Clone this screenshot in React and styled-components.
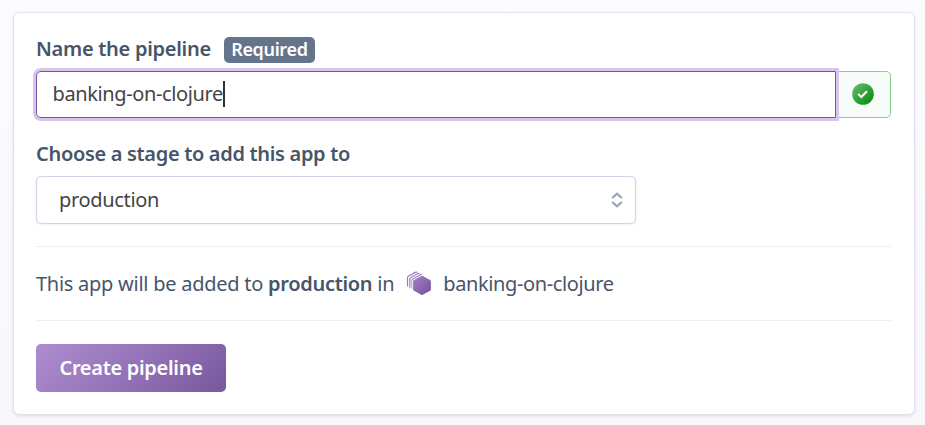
import React from "react";
import styled, { createGlobalStyle } from "styled-components";

const GlobalStyle = createGlobalStyle`
  *, *::before, *::after { box-sizing: border-box; }
  body {
    margin: 0;
    background: linear-gradient(#fcfcff, #f8f7fc);
    font-family: "Noto Sans", "Open Sans", sans-serif;
    font-size: 20px;
    color: #475569;
  }
`;

const Page = styled.main`
  height: 425px;
  padding: 13px 11px 11px 14px;
  overflow: hidden;
`;

const Card = styled.form`
  display: flex;
  flex-direction: column;
  height: 401px;
  padding: 22px 23px 22px 22px;
  background: #fff;
  border-radius: 5px;
  box-shadow: 0 0 0 1px #e3e2ea, 0 1px 3px 1px rgba(60, 50, 90, 0.14);
`;

const LabelRow = styled.div`
  display: flex;
  align-items: center;
  gap: 13px;
  height: 28px;
`;

const Label = styled.label`
  line-height: 28px;
  font-weight: 600;
  white-space: nowrap;
  letter-spacing: ${({ $tracking }) => $tracking};
`;

const Badge = styled.span`
  width: 91px;
  height: 26px;
  margin-top: 2px;
  border-radius: 5px;
  background: #64748b;
  color: #fff;
  font-size: 18px;
  font-weight: 600;
  line-height: 25px;
  letter-spacing: -0.35px;
  text-align: center;
`;

const InputGroup = styled.div`
  display: flex;
  height: 47px;
  margin-top: 8px;
`;

const TextField = styled.div`
  display: flex;
  align-items: center;
  width: 800px;
  padding: 0 15.5px 2px;
  background: #fff;
  border: 1px solid #7a559f;
  border-radius: 5px 0 0 5px;
  box-shadow: 0 0 0 3px #d7c5ec;
  color: #444;
  letter-spacing: -0.38px;
  z-index: 1;
`;

const Caret = styled.span`
  width: 2px;
  height: 26px;
  background: #333;
`;

const Status = styled.div`
  display: flex;
  align-items: center;
  justify-content: center;
  width: 55px;
  padding: 0 1px 2px 0;
  background: #f8fcf9;
  border: 1px solid #86cf93;
  border-left: 0;
  border-radius: 0 5px 5px 0;
`;

const StageLabel = styled(Label)`
  margin-top: 22px;
`;

const Select = styled.div`
  display: flex;
  align-items: center;
  justify-content: space-between;
  width: 600px;
  height: 48px;
  margin-top: 8px;
  padding: 0 12px 1px 22px;
  background: #fff;
  border: 1px solid #cbd5e5;
  border-radius: 5px;
  box-shadow: 0 1px 3px rgba(30, 40, 80, 0.07);
  color: #444;
  letter-spacing: -0.32px;
`;

const Summary = styled.div`
  display: flex;
  align-items: center;
  height: 75px;
  margin-top: 22px;
  border: solid #eeeff2;
  border-width: 1px 0;
  white-space: nowrap;
`;

const SummaryText = styled.span`
  letter-spacing: -0.26px;

  strong {
    font-weight: 600;
    letter-spacing: -0.3px;
  }
`;

const PipelineName = styled.span`
  margin-left: 11px;
  letter-spacing: -0.38px;
`;

const HexIcon = styled.svg`
  width: 26px;
  height: 26px;
  margin-left: 12px;
`;

const SubmitButton = styled.button`
  width: 190px;
  height: 48px;
  margin-top: 23px;
  padding: 0 0 1px;
  border: 0;
  border-radius: 5px;
  background: linear-gradient(135deg, #ae8ed0, #79589f);
  color: #fff;
  font: 600 20px/28px "Noto Sans", sans-serif;
  letter-spacing: -0.3px;
`;

const hexPath =
  "M15.2 5.1Q16 4.6 16.8 5.1L24 9.1Q24.9 9.6 24.9 10.5V18.4Q24.9 19.3 24 19.8L16.8 23.7Q16 24.1 15.2 23.7L8 19.8Q7.1 19.3 7.1 18.4V10.5Q7.1 9.6 8 9.1Z";

function PipelineIcon() {
  return (
    <HexIcon viewBox="0 0 26 26" fill="none">
      <defs>
        <linearGradient id="hex" x1="7" y1="5" x2="25" y2="24" gradientUnits="userSpaceOnUse">
          <stop stopColor="#a47fc5" />
          <stop offset="1" stopColor="#76509b" />
        </linearGradient>
      </defs>
      <path d="M1.5 15.5V6.6Q1.5 5.7 2.3 5.3L9.2 1.4Q10.2 0.9 11.3 1.4M3.8 16.7V8Q3.8 7.1 4.6 6.7L11.8 2.6L13.4 2.3M6 17.8V9.3Q6 8.4 6.8 8L15.8 3" stroke="#9e7cc1" strokeWidth="1.2" />
      <path d={hexPath} stroke="#fff" strokeWidth="1.4" />
      <path d={hexPath} fill="url(#hex)" />
    </HexIcon>
  );
}

function CheckIcon() {
  return (
    <svg width="22" height="22" viewBox="0 0 22 22" fill="none">
      <defs>
        <linearGradient id="check" x1="3" y1="3" x2="18" y2="19" gradientUnits="userSpaceOnUse">
          <stop stopColor="#5cb665" />
          <stop offset="1" stopColor="#0c9215" />
        </linearGradient>
      </defs>
      <circle cx="11" cy="11" r="10.8" fill="url(#check)" />
      <path d="m6.6 11.4 2.7 2.6 5.2-5.3" stroke="#fff" strokeWidth="2" strokeLinecap="round" />
    </svg>
  );
}

function SortIcon() {
  return (
    <svg width="12" height="16" viewBox="0 0 12 16" fill="none">
      <path d="m1.2 6 4.8-4.3L10.8 6M1.2 10l4.8 4.3 4.8-4.3" stroke="#94a3b8" strokeWidth="2.1" />
    </svg>
  );
}

export default function App() {
  return (
    <>
      <GlobalStyle />
      <Page>
        <Card>
          <LabelRow>
            <Label $tracking="-0.28px">Name the pipeline</Label>
            <Badge>Required</Badge>
          </LabelRow>
          <InputGroup>
            <TextField>banking-on-clojure<Caret /></TextField>
            <Status><CheckIcon /></Status>
          </InputGroup>
          <StageLabel $tracking="-0.32px">Choose a stage to add this app to</StageLabel>
          <Select>production<SortIcon /></Select>
          <Summary>
            <SummaryText>This app will be added to <strong>production</strong> in</SummaryText>
            <PipelineIcon />
            <PipelineName>banking-on-clojure</PipelineName>
          </Summary>
          <SubmitButton type="button">Create pipeline</SubmitButton>
        </Card>
      </Page>
    </>
  );
}
